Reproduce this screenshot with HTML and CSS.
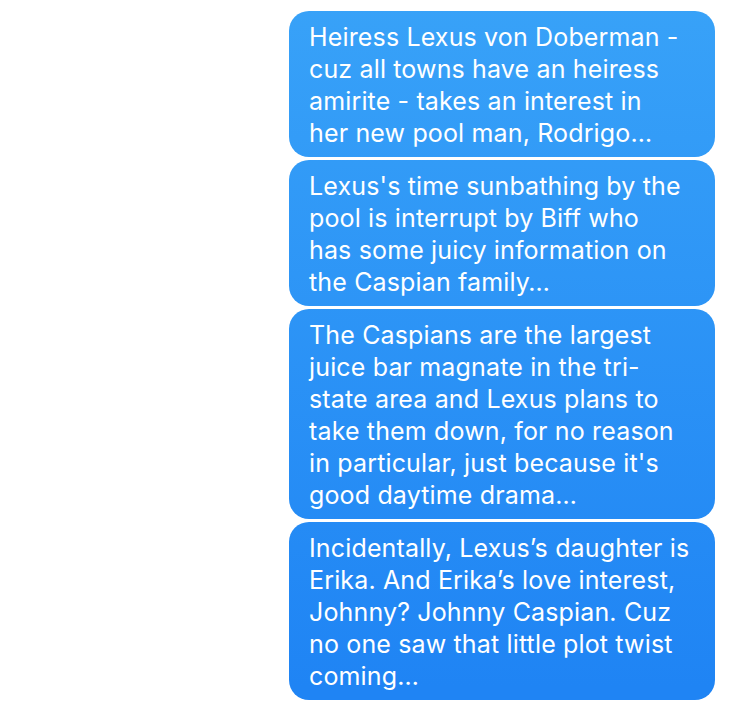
FILE: index.html
```html
<!DOCTYPE html>
<html>
<head>
<meta charset="utf-8">
<link rel="stylesheet" href="styles.css">
</head>
<body>
<div class="thread">
  <div class="bubble">Heiress Lexus von Doberman -<br>cuz all towns have an heiress<br>amirite - takes an interest in<br>her new pool man, Rodrigo…</div>
  <div class="bubble">Lexus's time sunbathing by the<br>pool is interrupt by Biff who<br>has some juicy information on<br>the Caspian family…</div>
  <div class="bubble">The Caspians are the largest<br>juice bar magnate in the tri-<br>state area and Lexus plans to<br>take them down, for no reason<br>in particular, just because it's<br>good daytime drama…</div>
  <div class="bubble">Incidentally, Lexus’s daughter is<br>Erika. And Erika’s love interest,<br>Johnny? Johnny Caspian. Cuz<br>no one saw that little plot twist<br>coming…</div>
</div>
</body>
</html>
```
FILE: styles.css
```css
html, body {
  margin: 0;
  padding: 0;
  background: #ffffff;
}
.thread {
  width: 426px;
  margin: 11px 0 0 289px;
  display: flex;
  flex-direction: column;
  gap: 3px;
}
.bubble {
  background: linear-gradient(180deg, #38a2f8 0px, #1f84f4 686px);
  background-attachment: fixed;
  background-size: 746px 707px;
  border-radius: 20px;
  padding: 10px 12px 8px 20px;
  color: #ffffff;
  font-family: Inter, "Noto Sans", sans-serif;
  font-size: 25px;
  line-height: 32px;
  letter-spacing: 0.15px;
  white-space: nowrap;
}
```
